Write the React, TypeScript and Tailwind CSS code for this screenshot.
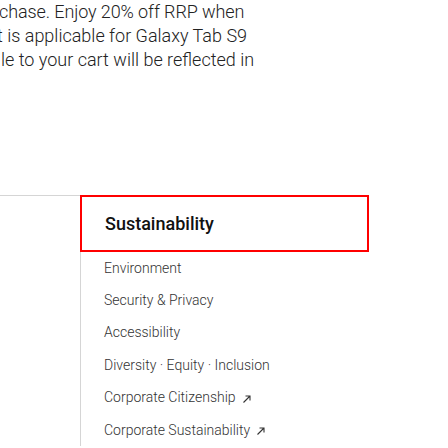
export default function App() {
  const links = [
    { label: "Environment", ext: false },
    { label: "Security & Privacy", ext: false },
    { label: "Accessibility", ext: false },
    { label: "Diversity · Equity · Inclusion", ext: false },
    { label: "Corporate Citizenship", ext: true },
    { label: "Corporate Sustainability", ext: true },
  ];

  return (
    <div className="w-[448px] h-[448px] overflow-hidden bg-white font-['Roboto',sans-serif]">
      {/* Promo text, clipped on the left */}
      <div className="text-[18px] leading-[24px] font-light text-[#222] whitespace-nowrap overflow-hidden">
        <p className="-ml-[1px] tracking-[-0.1px]">chase. Enjoy 20% off RRP when</p>
        <p className="-ml-[3px]">t is applicable for Galaxy Tab S9</p>
        <p className="ml-[1px]">le to your cart will be reflected in</p>
      </div>

      {/* Footer menu */}
      <div className="mt-[123px] flex w-[369px] border-t border-[#d5d5d5]">
        <div className="w-[80px]" />
        <div className="flex-1 border-l border-[#d5d5d5]">
          <button className="-ml-[1px] -mt-[1px] flex h-[57px] w-[289px] items-center border-2 border-[#ff0000] pl-[23px] text-left text-[18px] font-medium text-[#111]">
            Sustainability
          </button>
          <ul className="pl-[23px] text-[14px] font-light text-[#333]">
            {links.map((l) => (
              <li key={l.label} className="flex h-[32.4px] items-center gap-[6px]">
                <span>{l.label}</span>
                {l.ext && (
                  <svg width="10" height="10" viewBox="0 0 10 10" fill="none" className="mt-[2px]">
                    <path d="M1.5 8.5L8 2M3.5 2H8V6.5" stroke="#333" strokeWidth="1.1" />
                  </svg>
                )}
              </li>
            ))}
          </ul>
        </div>
      </div>
    </div>
  );
}
